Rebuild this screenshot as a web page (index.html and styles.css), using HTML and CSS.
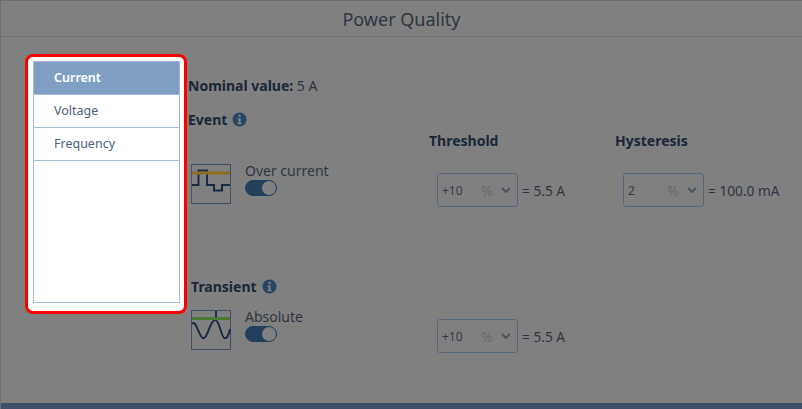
FILE: index.html
```html
<!DOCTYPE html>
<html>
<head>
  <meta charset="UTF-8">
  <title>Power Quality</title>
  <link rel="stylesheet" href="styles.css">
</head>
<body>
  <div class="dialog">
    <div class="dialog-header">Power Quality</div>
    <div class="dialog-body">
      <!-- Liste de gauche -->
      <div class="side-frame">
        <ul class="side-list">
          <li class="side-item active">Current</li>
          <li class="side-item">Voltage</li>
          <li class="side-item">Frequency</li>
        </ul>
      </div>

      <div class="content">
        <div class="nominal"><b>Nominal value:</b> 5 A</div>
        <div class="section-title">
          <b>Event</b>
          <svg class="info" viewBox="0 0 16 16"><circle cx="8" cy="8" r="7.5"/><rect x="6.9" y="3" width="2.3" height="2.3" fill="#808080"/><path d="M5.9 6.6h3.3v5h1.1v1.5H5.8v-1.5h1.1V8.1H5.9z" fill="#808080"/></svg>
        </div>

        <div class="col-heads">
          <b class="head-threshold">Threshold</b>
          <b class="head-hysteresis">Hysteresis</b>
        </div>

        <div class="row row-event">
          <svg class="graph" viewBox="0 0 40 40">
            <rect x="0.5" y="0.5" width="39" height="39" fill="none" stroke="#3f5068"/>
            <path d="M1 21H7.5V6.5H16V21H23V26.5H31V21H39" fill="none" stroke="#1a2a42" stroke-width="2"/>
            <rect x="1" y="7.5" width="38" height="3" fill="#8c6e23"/>
          </svg>
          <div class="name">
            <span>Over current</span>
            <span class="toggle"></span>
          </div>
          <div class="field field-threshold">
            <div class="select"><span class="sel-value">+10</span><span class="sel-unit">%</span><svg class="chevron" viewBox="0 0 10 6"><path d="M1 1l4 4 4-4"/></svg></div>
            <span class="result">= 5.5 A</span>
          </div>
          <div class="field field-hysteresis">
            <div class="select"><span class="sel-value">2</span><span class="sel-unit">%</span><svg class="chevron" viewBox="0 0 10 6"><path d="M1 1l4 4 4-4"/></svg></div>
            <span class="result">= 100.0 mA</span>
          </div>
        </div>

        <div class="section-title transient">
          <b>Transient</b>
          <svg class="info" viewBox="0 0 16 16"><circle cx="8" cy="8" r="7.5"/><rect x="6.9" y="3" width="2.3" height="2.3" fill="#808080"/><path d="M5.9 6.6h3.3v5h1.1v1.5H5.8v-1.5h1.1V8.1H5.9z" fill="#808080"/></svg>
        </div>

        <div class="row row-transient">
          <svg class="graph" viewBox="0 0 40 40">
            <rect x="0.5" y="0.5" width="39" height="39" fill="none" stroke="#3f5068"/>
            <path d="M1 14C5 8 8 28.3 12.3 28.3C17 28.3 19 10 24 10C29 10 30 28.3 34 28.3C36.5 28.3 38 24 39 19" fill="none" stroke="#1a2a42" stroke-width="2"/>
            <rect x="24" y="1" width="2" height="7" fill="#1a2a42"/>
            <rect x="1" y="7" width="38" height="3" fill="#4a7a32"/>
          </svg>
          <div class="name">
            <span>Absolute</span>
            <span class="toggle"></span>
          </div>
          <div class="field field-threshold">
            <div class="select"><span class="sel-value">+10</span><span class="sel-unit">%</span><svg class="chevron" viewBox="0 0 10 6"><path d="M1 1l4 4 4-4"/></svg></div>
            <span class="result">= 5.5 A</span>
          </div>
        </div>
      </div>
    </div>
    <div class="dialog-footer"></div>
  </div>
</body>
</html>
```

FILE: styles.css
```css
html, body {
  margin: 0;
  height: 100%;
}
body {
  font-family: "Noto Sans", sans-serif;
  font-size: 14px;
  color: #2e3542;
  background-color: #808080;
}
b {
  font-weight: 700;
  color: #1a2738;
}
.dialog {
  height: 409px;
  box-sizing: border-box;
  border-top: 1px solid #6e6e6e;
  border-left: 1px solid #6e6e6e;
  display: flex;
  flex-direction: column;
  overflow: hidden;
}
.dialog-header {
  height: 36px;
  box-sizing: border-box;
  border-bottom: 1px solid #6c7278;
  text-align: center;
  font-size: 18px;
  line-height: 36px;
  color: #2e3542;
}
.dialog-body {
  flex: 1;
  display: flex;
  align-items: flex-start;
  padding: 17px 0 0 24px;
}
.dialog-footer {
  height: 6px;
  background-color: #3f5068;
}

/* Liste de gauche */
.side-frame {
  width: 162px;
  height: 260px;
  box-sizing: border-box;
  background-color: #fff;
  border: 3px solid #f00;
  border-radius: 8px;
  padding: 4px 4px 4px 5px;
}
.side-list {
  list-style: none;
  margin: 0;
  padding: 0;
  height: 242px;
  box-sizing: border-box;
  border: 1px solid #a3bbd6;
}
.side-item {
  height: 33px;
  box-sizing: border-box;
  border-bottom: 1px solid #a3bbd6;
  padding-left: 20px;
  line-height: 31px;
  font-size: 12.5px;
  color: #4f5f78;
}
.side-item.active {
  background-color: #7f9fc4;
  color: #fff;
  font-weight: 600;
}

.content {
  flex: 1;
  padding-left: 1px;
}
.nominal {
  margin-top: 22px;
  height: 20px;
  line-height: 20px;
}
.section-title {
  display: flex;
  align-items: center;
  gap: 5px;
  height: 20px;
  margin-top: 13px;
}
.info {
  width: 15px;
  height: 15px;
  fill: #274666;
}
.col-heads {
  height: 20px;
  margin-top: 2px;
  display: flex;
}
.head-threshold {
  margin-left: 241px;
  width: 186px;
}
.row {
  display: flex;
  align-items: flex-start;
  padding-left: 3px;
}
.row-event {
  margin-top: 13px;
  height: 99px;
}
.row-transient {
  margin-top: 14px;
}
.transient {
  margin-left: 3px;
}
.graph {
  width: 40px;
  height: 40px;
  flex: none;
}
.name {
  width: 192px;
  margin-left: 14px;
  display: flex;
  flex-direction: column;
  line-height: 14px;
}
.toggle {
  display: block;
  position: relative;
  width: 32px;
  height: 16px;
  box-sizing: border-box;
  border: 1px solid #223f5e;
  border-radius: 8px;
  background-color: #223f5e;
  margin-top: 2px;
}
.toggle::after {
  content: "";
  position: absolute;
  right: 0;
  top: 0;
  width: 14px;
  height: 14px;
  border-radius: 50%;
  background-color: #808080;
}
.field {
  display: flex;
  align-items: center;
  gap: 4px;
  margin-top: 9px;
  font-size: 13.7px;
}
.field-threshold {
  width: 186px;
}
.select {
  width: 81px;
  height: 34px;
  box-sizing: border-box;
  border: 1px solid #55677d;
  border-radius: 3px;
  display: flex;
  align-items: center;
  padding: 0 6px 0 4px;
  font-size: 12px;
  color: #333a46;
}
.sel-value {
  width: 40px;
}
.sel-unit {
  font-size: 14px;
  color: #666a6e;
  width: 21px;
}
.chevron {
  width: 10px;
  height: 6px;
  fill: none;
  stroke: #4a5260;
  stroke-width: 2;
}
```
